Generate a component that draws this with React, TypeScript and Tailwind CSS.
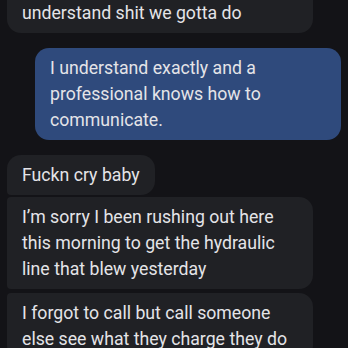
type Msg = {
  text: string
  mine?: boolean
  corners: string
  gap: string
  extra?: string
}

const messages: Msg[] = [
  {
    text: "understand shit we gotta do",
    corners: "rounded-[14px] rounded-tl-[4px]",
    gap: "mt-[-40px]",
    extra: "pt-[40px] w-[306px]",
  },
  {
    text: "I understand exactly and a professional knows how to communicate.",
    mine: true,
    corners: "rounded-[14px]",
    gap: "mt-[15px]",
  },
  {
    text: "Fuckn cry baby",
    corners: "rounded-[14px] rounded-bl-[4px]",
    gap: "mt-[15px]",
  },
  {
    text: "I’m sorry I been rushing out here this morning to get the hydraulic line that blew yesterday",
    corners: "rounded-[14px] rounded-l-[4px]",
    gap: "mt-[2px]",
  },
  {
    text: "I forgot to call but call someone else see what they charge they do",
    corners: "rounded-[14px] rounded-tl-[4px]",
    gap: "mt-[4px]",
  },
]

const Bubble = ({ msg }: { msg: Msg }) => {
  return (
    <div className={`flex ${msg.mine ? "justify-end pr-[7px]" : "justify-start pl-[7px]"} ${msg.gap}`}>
      <div
        className={`max-w-[306px] px-[15px] py-[7px] text-[17.7px] leading-[26px] text-[#e4e4e8] ${msg.corners} ${
          msg.mine ? "bg-[#2f4a7c]" : "bg-[#202125]"
        } ${msg.extra ?? ""}`}
      >
        {msg.text}
      </div>
    </div>
  )
}

export default function App() {
  return (
    <div
      className="w-[348px] h-[348px] overflow-hidden bg-[#131317] flex flex-col"
      style={{ fontFamily: "Roboto, 'Noto Sans', sans-serif" }}
    >
      {messages.map((m, i) => (
        <Bubble key={i} msg={m} />
      ))}
    </div>
  )
}
